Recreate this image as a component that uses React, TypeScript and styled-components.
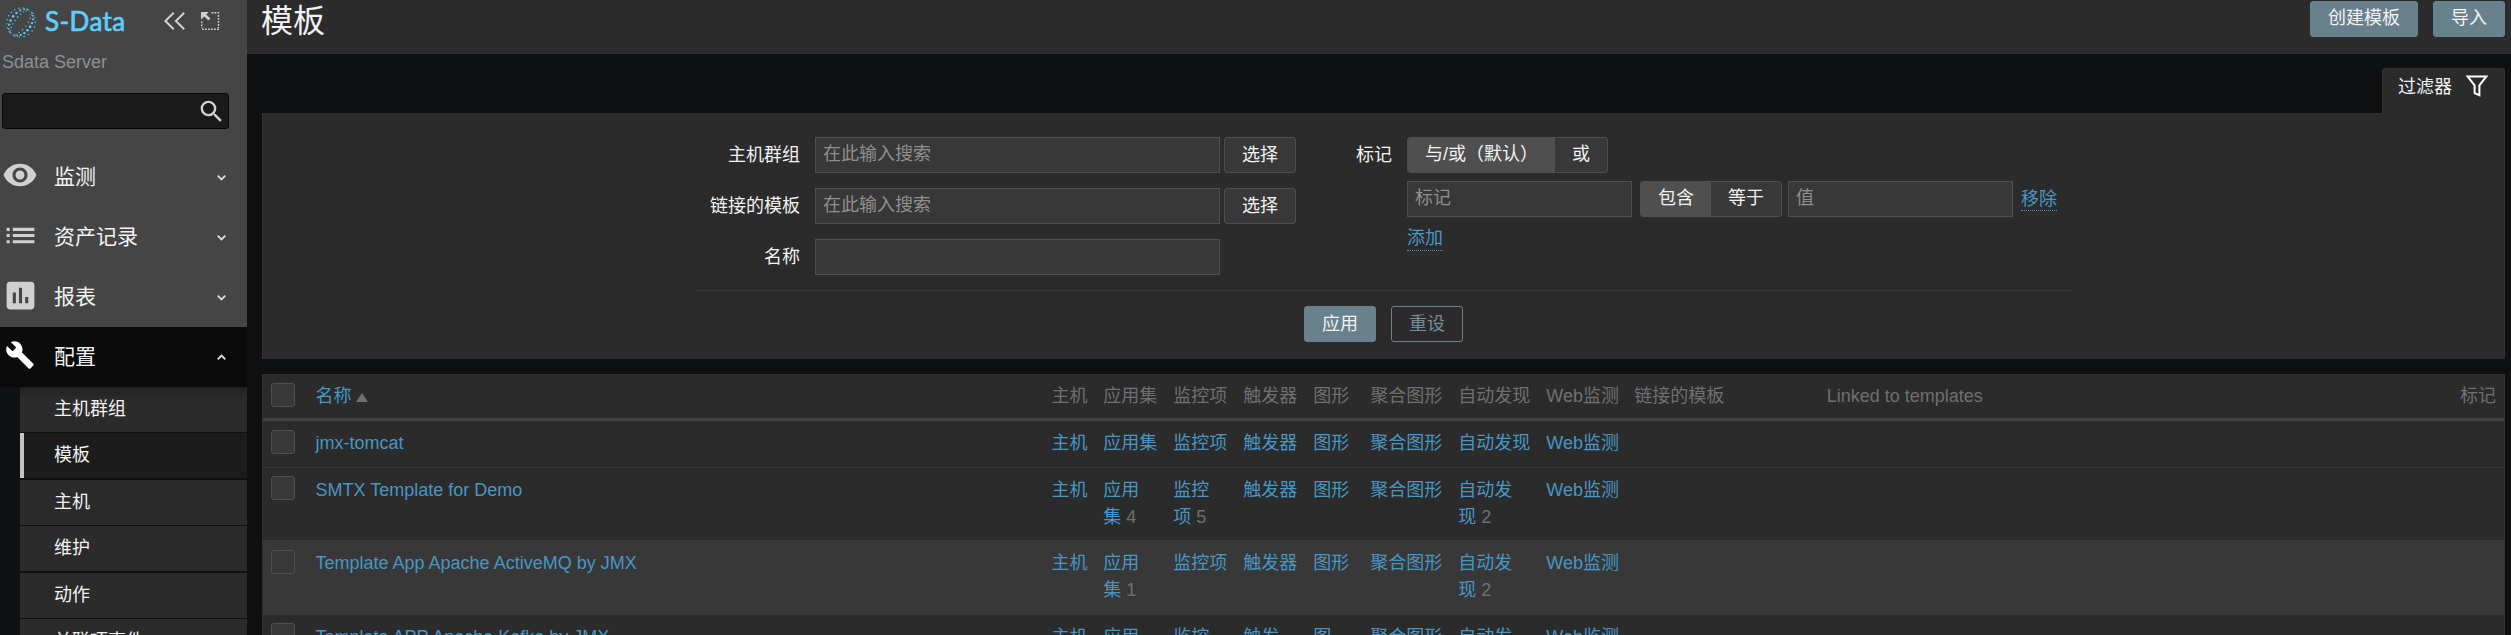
import React from "react";
import styled, { createGlobalStyle } from "styled-components";
import { MdAssessment, MdBuild, MdList, MdSearch, MdVisibility } from "react-icons/md";

const GlobalStyle = createGlobalStyle`
  *, *::before, *::after { box-sizing: border-box; }
  html, body { margin: 0; background: #0e1012; overflow: hidden; }
  body, input, button {
    font-family: "Liberation Sans", "Noto Sans CJK SC", sans-serif;
    font-size: 18px;
    line-height: 27px;
    color: #f2f2f2;
  }
`;

const Page = styled.div`
  display: flex;
  height: 635px;
  overflow: hidden;
  background: #0e1012;
`;

/* ---------- sidebar ---------- */

const Sidebar = styled.aside`
  flex: none;
  width: 247px;
  background: #454545;
  display: flex;
  flex-direction: column;
`;

const Brand = styled.div`
  flex: none;
  display: flex;
  align-items: center;
  height: 45px;
  padding-left: 6px;
`;

const BrandName = styled.span`
  margin-left: 9px;
  width: 119px;
  padding-bottom: 3px;
  font-family: Lato, sans-serif;
  font-weight: 400;
  font-size: 26px;
  line-height: 30px;
  letter-spacing: 0.4px;
  -webkit-text-stroke: 0.7px #5fcdfb;
  color: #5fcdfb;
`;

const BrandTools = styled.div`
  display: flex;
  align-items: center;
  gap: 16px;
  padding-bottom: 3px;
`;

const ServerName = styled.div`
  flex: none;
  height: 48px;
  padding: 4px 0 0 2px;
  color: #8b9095;
`;

const SearchBox = styled.div`
  flex: none;
  display: flex;
  align-items: center;
  justify-content: flex-end;
  width: 227px;
  height: 36px;
  margin: 0 0 18px 2px;
  padding-right: 2px;
  background: #1a1a1a;
  border: 1px solid #05090d;
  border-radius: 3px;
  color: #d0d0d0;
`;

const MenuItem = styled.div<{ $open?: boolean }>`
  flex: none;
  display: flex;
  align-items: center;
  height: 60px;
  padding: 0 21px 0 2px;
  background: ${(p) => (p.$open ? "#0b0b0b" : "transparent")};
  color: ${(p) => (p.$open ? "#ffffff" : "#d0d0d0")};
`;

const MenuIcon = styled.span<{ $size: number }>`
  display: flex;
  align-items: center;
  justify-content: center;
  width: 36px;
  height: 36px;
  margin-bottom: 4px;
  svg {
    flex: none;
    width: ${(p) => p.$size}px;
    height: ${(p) => p.$size}px;
  }
`;

const MenuLabel = styled.span`
  flex: 1;
  padding: 0 0 2px 16px;
  font-size: 21px;
  color: #f2f2f2;
`;

const SubMenu = styled.div`
  flex: none;
  display: grid;
  grid-template-rows: 46px 47px 46px 47px 46px 46px;
  padding-left: 20px;
  background: #0e1012;
`;

const SubItem = styled.div<{ $active?: boolean }>`
  height: 45px;
  padding: 9px 0 0 ${(p) => (p.$active ? 30 : 34)}px;
  background: ${(p) => (p.$active ? "#1c1c1c" : "#2b2b2b")};
  border-left: ${(p) => (p.$active ? "4px solid #c4c4c4" : "none")};
  &:first-child {
    background: linear-gradient(#212121, #2b2b2b 12px);
  }
`;

/* ---------- header ---------- */

const Main = styled.main`
  flex: 1;
  min-width: 0;
`;

const Header = styled.header`
  display: flex;
  justify-content: space-between;
  height: 54px;
  padding: 1px 6px 0 14px;
  background: #2b2b2b;
  border-bottom: 1px solid #303030;
`;

const Title = styled.h1`
  margin: 0;
  font-size: 32px;
  font-weight: 400;
  line-height: 40px;
`;

const Actions = styled.div`
  display: flex;
  gap: 15px;
`;

const Button = styled.button<{ $kind?: "primary" | "outline" | "grey"; $width: number }>`
  width: ${(p) => p.$width}px;
  height: 36px;
  padding: 0 0 2px;
  border-radius: 3px;
  border: 1px solid ${(p) => (p.$kind === "grey" ? "#4f4f4f" : "#69808d")};
  background: ${(p) =>
    p.$kind === "outline" ? "transparent" : p.$kind === "grey" ? "#383838" : "#69808d"};
  color: ${(p) => (p.$kind === "outline" ? "#768d99" : "#f2f2f2")};
`;

/* ---------- filter ---------- */

const Content = styled.div`
  padding: 14px 6px 0 15px;
`;

const FilterTab = styled.div`
  display: flex;
  align-items: center;
  width: 123px;
  height: 46px;
  margin: 0 0 -1px auto;
  padding: 0 15px 8px 15px;
  gap: 14px;
  position: relative;
  background: #2b2b2b;
  border: 1px solid #303030;
  border-bottom: none;
  border-radius: 3px 3px 0 0;
  svg {
    margin-bottom: 3px;
  }
`;

const FilterPanel = styled.section`
  height: 246px;
  padding: 23px 432px 0;
  background: #2b2b2b;
  border: 1px solid #303030;
`;

const FilterForms = styled.div`
  display: grid;
  grid-template-columns: 616px 1fr;
  height: 154px;
  border-bottom: 1px solid #383838;
`;

const LeftForm = styled.div`
  display: grid;
  grid-template-columns: 120px 405px 76px;
  grid-auto-rows: 36px;
  row-gap: 15px;
  align-content: start;
`;

const RightForm = styled.div`
  display: grid;
  grid-template-columns: 96px 1fr;
  align-content: start;
`;

const Label = styled.label`
  padding: 5px 15px 0 0;
  text-align: right;
  white-space: nowrap;
`;

const TextInput = styled.input<{ $width: number }>`
  width: ${(p) => p.$width}px;
  height: 36px;
  padding: 0 7px 2px;
  background: #383838;
  border: 1px solid #4f4f4f;
  border-radius: 0;
  outline: none;
  &::placeholder {
    color: #8f8f8f;
    opacity: 1;
  }
`;

const SelectButton = styled(Button)`
  margin-left: 4px;
  padding: 1px 0 0;
`;

const TagFields = styled.div`
  display: flex;
  flex-direction: column;
  align-items: flex-start;
  gap: 8px;
`;

const TagRow = styled.div`
  display: flex;
  align-items: flex-start;
`;

const Segmented = styled.div`
  display: flex;
  height: 36px;
  border: 1px solid #4f4f4f;
  border-radius: 3px;
  background: #383838;
  overflow: hidden;
`;

const TagOperator = styled(Segmented)`
  margin: 0 6px 0 8px;
`;

const Segment = styled.span<{ $on?: boolean }>`
  padding: 3px 17px 0;
  white-space: nowrap;
  background: ${(p) => (p.$on ? "#4f4f4f" : "transparent")};
`;

const DottedLink = styled.a`
  height: 26px;
  line-height: 27px;
  color: #4796c4;
  border-bottom: 1px dotted #4796c4;
`;

const RemoveLink = styled(DottedLink)`
  margin: 4px 0 0 8px;
  line-height: 29px;
`;

const FilterButtons = styled.div`
  display: flex;
  justify-content: center;
  gap: 15px;
  padding-top: 15px;
  button {
    padding: 1px 0 0;
  }
`;

/* ---------- table ---------- */

const Table = styled.section`
  margin-top: 15px;
  background: #2b2b2b;
  border: 1px solid #303030;
`;

const Row = styled.div<{ $height: number; $head?: boolean; $hover?: boolean }>`
  display: grid;
  grid-template-columns: 52.5px 736px 51.8px 70px 70px 70px 57px 88px 88px 88px 192.4px 633.3px 1fr;
  height: ${(p) => p.$height}px;
  padding-top: ${(p) => (p.$head ? 8 : 9)}px;
  border-bottom: ${(p) => (p.$head ? "3px solid #404040" : "1px solid #383838")};
  background: ${(p) => (p.$hover ? "#383838" : "transparent")};
  color: #6f6f6f;
`;

const Cell = styled.div`
  padding-right: 15px;
  &:last-child {
    padding-right: 0;
    white-space: nowrap;
  }
`;

const Link = styled.a`
  color: #4796c4;
`;

const Check = styled.span<{ $lift?: boolean }>`
  display: block;
  width: 24px;
  height: 24px;
  margin: ${(p) => (p.$lift ? -1 : 0)}px 0 0 8px;
  background: #383838;
  border: 1px solid #4f4f4f;
  border-radius: 3px;
`;

const SortArrow = styled.span`
  display: inline-block;
  margin-left: 4px;
  border: 6px solid transparent;
  border-top: none;
  border-bottom: 9px solid #6f6f6f;
`;

/* ---------- drawings ---------- */

const GlobeLogo = () => {
  const dots: { x: number; y: number; r: number }[] = [];
  const tilt = (-52 * Math.PI) / 180;
  const bands = [-14, -10, -6, 6, 10, 14];
  bands.forEach((b, n) => {
    const steps = n % 2 ? 4 : 4.5;
    for (let i = -steps; i <= steps; i++) {
      const t = (i / steps) * 1.3;
      const u = Math.sin(t) * 15;
      const v = b * Math.cos(t);
      const x = 15 + u * Math.cos(tilt) - v * Math.sin(tilt);
      const y = 15.5 + u * Math.sin(tilt) + v * Math.cos(tilt);
      const r = 0.5 + 0.8 * Math.cos(t) * (Math.abs(b) === 10 ? 1 : 0.35);
      dots.push({ x, y, r });
    }
  });
  return (
    <svg width="30" height="32" viewBox="0 0 30 32">
      {dots.map((d, i) => (
        <circle key={i} cx={d.x} cy={d.y} r={d.r} fill="#5cc8f4" />
      ))}
    </svg>
  );
};

const CollapseIcon = () => (
  <svg width="21" height="18" viewBox="0 0 21 18" fill="none" stroke="#d0d0d0" strokeWidth="2">
    <path d="M9.7 0.7 1.4 9l8.3 8.3M20.2 0.7 11.9 9l8.3 8.3" />
  </svg>
);

const KioskIcon = () => (
  <svg width="19" height="18" viewBox="0 0 19 18">
    <path
      d="M10.5 .75H18.2M17.5 3V16M1 17.25H18.2M.75 9.5V16"
      fill="none"
      stroke="#d0d0d0"
      strokeWidth="1.5"
      strokeDasharray="1.8 1.2"
    />
    <path d="M0 0H7.6L5.3 2.4 9.4 6.4 7.4 8.4 3.3 4.4 0 7.6Z" fill="#d0d0d0" />
  </svg>
);

const Chevron = ({ up }: { up?: boolean }) => (
  <svg width="9" height="7" viewBox="0 0 9 7" fill="none" stroke="#dcdcdc" strokeWidth="1.9">
    <path d={up ? "M.7 5.4 4.5 1.6 8.3 5.4" : "M.7 1.6 4.5 5.4 8.3 1.6"} />
  </svg>
);

const FunnelIcon = () => (
  <svg width="22" height="22" viewBox="0 0 22 22" fill="none" stroke="#ffffff" strokeWidth="2">
    <path d="M1.8 1.6H20.2L13.4 10.3V20.2L8.6 18.2V10.3Z" />
  </svg>
);

/* ---------- data ---------- */

const menu = [
  { label: "监测", icon: <MdVisibility />, size: 36 },
  { label: "资产记录", icon: <MdList />, size: 37 },
  { label: "报表", icon: <MdAssessment />, size: 37 },
  { label: "配置", icon: <MdBuild />, size: 30, open: true },
];

const subMenu = ["主机群组", "模板", "主机", "维护", "动作", "关联项事件"];

const linkColumns = ["主机", "应用集", "监控项", "触发器", "图形", "聚合图形", "自动发现", "Web监测"];

type Template = {
  name: string;
  height: number;
  counts: Record<string, number>;
  hover?: boolean;
  lift?: boolean;
};

const templates: Template[] = [
  { name: "jmx-tomcat", height: 47, counts: {} },
  { name: "SMTX Template for Demo", height: 73, counts: { 应用集: 4, 监控项: 5, 自动发现: 2 }, lift: true },
  { name: "Template App Apache ActiveMQ by JMX", height: 74, counts: { 应用集: 1, 自动发现: 2 }, hover: true },
  {
    name: "Template APP Apache Kafka by JMX",
    height: 73,
    counts: { 应用集: 8, 监控项: 9, 触发器: 3, 图形: 7, 自动发现: 1 },
    lift: true,
  },
];

export default function App() {
  return (
    <>
      <GlobalStyle />
      <Page>
        <Sidebar>
          <Brand>
            <GlobeLogo />
            <BrandName>S-Data</BrandName>
            <BrandTools>
              <CollapseIcon />
              <KioskIcon />
            </BrandTools>
          </Brand>
          <ServerName>Sdata Server</ServerName>
          <SearchBox>
            <MdSearch size={29} />
          </SearchBox>
          {menu.map((m) => (
            <MenuItem key={m.label} $open={m.open}>
              <MenuIcon $size={m.size}>{m.icon}</MenuIcon>
              <MenuLabel>{m.label}</MenuLabel>
              <Chevron up={m.open} />
            </MenuItem>
          ))}
          <SubMenu>
            {subMenu.map((s) => (
              <SubItem key={s} $active={s === "模板"}>
                {s}
              </SubItem>
            ))}
          </SubMenu>
        </Sidebar>
        <Main>
          <Header>
            <Title>模板</Title>
            <Actions>
              <Button $width={108}>创建模板</Button>
              <Button $width={72}>导入</Button>
            </Actions>
          </Header>
          <Content>
            <FilterTab>
              过滤器
              <FunnelIcon />
            </FilterTab>
            <FilterPanel>
              <FilterForms>
                <LeftForm>
                  <Label>主机群组</Label>
                  <TextInput $width={405} placeholder="在此输入搜索" />
                  <SelectButton $kind="grey" $width={72}>选择</SelectButton>
                  <Label>链接的模板</Label>
                  <TextInput $width={405} placeholder="在此输入搜索" />
                  <SelectButton $kind="grey" $width={72}>选择</SelectButton>
                  <Label>名称</Label>
                  <TextInput $width={405} />
                </LeftForm>
                <RightForm>
                  <Label>标记</Label>
                  <TagFields>
                    <Segmented>
                      <Segment $on>与/或（默认）</Segment>
                      <Segment>或</Segment>
                    </Segmented>
                    <TagRow>
                      <TextInput $width={225} placeholder="标记" />
                      <TagOperator>
                        <Segment $on>包含</Segment>
                        <Segment>等于</Segment>
                      </TagOperator>
                      <TextInput $width={225} placeholder="值" />
                      <RemoveLink>移除</RemoveLink>
                    </TagRow>
                    <DottedLink>添加</DottedLink>
                  </TagFields>
                </RightForm>
              </FilterForms>
              <FilterButtons>
                <Button $width={72}>应用</Button>
                <Button $kind="outline" $width={72}>重设</Button>
              </FilterButtons>
            </FilterPanel>
            <Table>
              <Row $height={46} $head>
                <Check />
                <Cell>
                  <Link>名称</Link>
                  <SortArrow />
                </Cell>
                {linkColumns.map((c) => (
                  <Cell key={c}>{c}</Cell>
                ))}
                <Cell>链接的模板</Cell>
                <Cell>Linked to templates</Cell>
                <Cell>标记</Cell>
              </Row>
              {templates.map((t) => (
                <Row key={t.name} $height={t.height} $hover={t.hover}>
                  <Check $lift={t.lift} />
                  <Cell>
                    <Link>{t.name}</Link>
                  </Cell>
                  {linkColumns.map((c) => (
                    <Cell key={c}>
                      <Link>{c}</Link>
                      {t.counts[c] !== undefined && `\u00a0${t.counts[c]}`}
                    </Cell>
                  ))}
                </Row>
              ))}
            </Table>
          </Content>
        </Main>
      </Page>
    </>
  );
}
